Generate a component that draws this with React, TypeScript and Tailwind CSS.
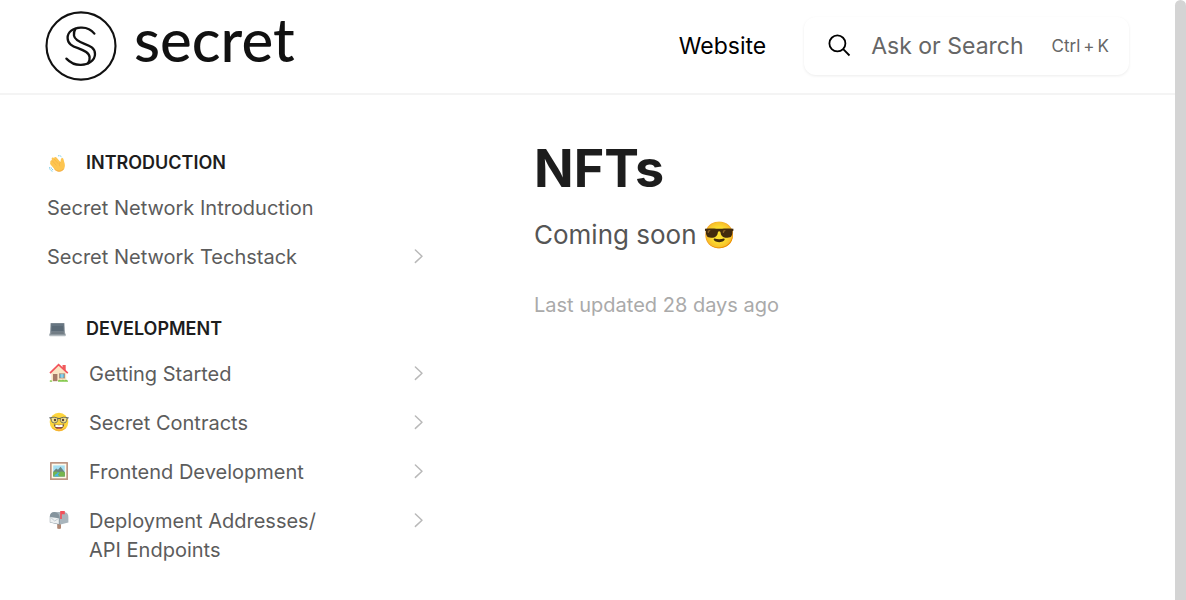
import type { ReactNode } from "react";

type Item = { label: string; icon?: ReactNode; nested?: boolean };
type Section = { title: string; icon: ReactNode; items: Item[] };

function WaveIcon() {
  return (
    <svg width="17" height="17" viewBox="0 0 17 17" fill="none" aria-hidden="true">
      <path d="M1.4 7.2C.8 6 2.4 4.6 3.2 5.4L2.7 4.2C2.3 2.9 4 2 4.7 3L5.2 3.6C4.9 2 6.6 1.4 7.5 2.5L11.4 7C11.9 5.4 11.5 3.3 13 3C14.6 2.8 14.6 5 15.2 7C16.6 10.8 15.8 14 13.4 15.4C10.6 17.2 7.4 16.6 5.4 14L1.5 9.4C.9 8.4 1.1 7.9 1.4 7.2Z" fill="#fdc550" />
      <path d="M3.2 5.6L7.4 10.4M5.1 4L9.3 8.8M11.4 7C10.2 8.4 10.2 10 10.8 11.2" stroke="#f2ad41" strokeWidth=".6" />
      <path d="M5.4 14C8 17 12.6 17 14.8 13.8" stroke="#f0a63c" strokeWidth=".9" />
      <path d="M9 .8C11 .4 12.4 1.2 12.8 2.2M.5 12.2C.6 14.6 1.8 16 4 16.3M2 12.4C2.2 13.8 3 14.6 4.3 14.9" stroke="#6fc8e4" strokeWidth=".9" strokeDasharray="1.4 .6" />
    </svg>
  );
}

function LaptopIcon() {
  return (
    <svg width="17" height="17" viewBox="0 0 17 17" aria-hidden="true">
      <path d="M2.2 2H14.8Q15.3 2 15.4 2.6L15.8 11H1.2L1.6 2.6Q1.7 2 2.2 2Z" fill="#7b8790" />
      <path d="M2.6 3H14.4L14.7 10.3H2.3Z" fill="#5b6a76" />
      <path d="M2.6 3H14.4L14.5 5H2.5Z" fill="#677682" />
      <path d="M1.2 11H15.8L16.8 14H.2Z" fill="#8d979e" />
      <path d="M2.4 11.5H14.6L15 12.6H2Z" fill="#59646d" />
      <path d="M.2 14H16.8V14.8Q16.6 15.2 16 15.2H1Q.4 15.2 .2 14.8Z" fill="#b2babf" />
    </svg>
  );
}

function HouseIcon() {
  return (
    <svg width="20" height="20" viewBox="0 0 20 20" aria-hidden="true">
      <path d="M13.5 2H16.7V8L13.5 5Z" fill="#f05b5b" />
      <path d="M2.4 9.2L9.6 2.4L17.2 9.2V18H2.4Z" fill="#fae6c4" />
      <path d="M1 10.2L9.6 1.7L18.8 10.2" fill="none" stroke="#f2545b" strokeWidth="1.7" />
      <rect x="4" y="11" width="4.4" height="7.2" fill="#a77b68" />
      <rect x="10.4" y="10.8" width="5.2" height="4.2" fill="#5db9dd" stroke="#b08a75" strokeWidth=".8" />
      <path d="M13 10.8V15" stroke="#fff" strokeWidth=".6" />
      <path d="M.8 18.8V17.6Q2 16.6 3.2 17.8V18.8ZM9 18.8V17.6Q10.5 16.2 12 17.3Q14 16 15.4 17.3Q17.6 15.8 19 18V18.8Z" fill="#83c94c" />
    </svg>
  );
}

function NerdIcon() {
  return (
    <svg width="20" height="20" viewBox="0 0 20 20" aria-hidden="true">
      <circle cx="10" cy="10" r="9.3" fill="#fdd53d" />
      <path d="M2.2 14.9A9.3 9.3 0 0 0 17.8 14.9Q10 20.4 2.2 14.9Z" fill="#f5af35" />
      <path d="M4.8 12.2Q10 13.4 15.2 12.2Q14.8 17 10 17T4.8 12.2Z" fill="#6d4c41" />
      <path d="M6.4 12.8Q10 13.5 13.6 12.8V14.9H6.4Z" fill="#fff" />
      <path d="M7.2 16.1Q10 15 12.8 16.1Q10 17.5 7.2 16.1Z" fill="#ef5a55" />
      <path d="M1.8 5.6Q5 4.6 8.7 6V8.5Q8.2 11 5.4 11T2.4 8.4ZM18.2 5.6Q15 4.6 11.3 6V8.5Q11.8 11 14.6 11T17.6 8.4Z" fill="#f3e28d" stroke="#4e565b" strokeWidth=".8" />
      <path d="M.3 5.8L2 6M8.7 6.7Q10 5.8 11.3 6.7M18 6L19.7 5.8" fill="none" stroke="#4e565b" />
      <circle cx="6" cy="8" r="1.2" fill="#5d4037" />
      <circle cx="14" cy="8" r="1.2" fill="#5d4037" />
    </svg>
  );
}

function PictureIcon() {
  return (
    <svg width="20" height="20" viewBox="0 0 20 20" aria-hidden="true">
      <rect x="1" y="1" width="18" height="18" rx=".6" fill="#bc9683" />
      <rect x="2.7" y="2.7" width="14.6" height="14.6" fill="#fff9ea" />
      <rect x="4.2" y="4.4" width="11.6" height="11" fill="#a6dff3" />
      <path d="M4.2 10.8L7.2 7.4L9 8.8L11.5 5.8L15.8 11.2V15.4H4.2Z" fill="#6b8582" />
      <path d="M4.2 11.2Q7 9.6 9.5 11.2Q13 9.5 15.8 11.5V15.4H4.2Z" fill="#76b54d" />
      <path d="M8.2 11.2Q12 11.5 9.4 13Q8 14 11 15.4H5.2Q5.4 13.4 8 12.5Q9 12 8.2 11.2Z" fill="#49b5e4" />
    </svg>
  );
}

function MailboxIcon() {
  return (
    <svg width="20" height="20" viewBox="0 0 20 20" aria-hidden="true">
      <path d="M8.2 12H12V18.5Q10 19.4 8.2 18.5Z" fill="#b08773" />
      <path d="M4.5 2H15Q19.4 2.6 19.4 7V12.6L10.6 14.8Z" fill="#a9b5bc" />
      <path d="M.8 6.5Q1 2.2 5.2 2.1Q9.8 2.4 10.6 7V14.8L.8 12.6Z" fill="#85949d" />
      <path d="M1.2 7L9.8 8.3V14L1.2 12.2Z" fill="#eef1f2" />
      <path d="M1.2 7L5.7 11L9.8 8.3" fill="none" stroke="#b8c4ca" strokeWidth=".8" />
      <path d="M11.2 1H15.8V4.2H12.8V9H11.2Z" fill="#f2505a" />
    </svg>
  );
}

const sections: Section[] = [
  {
    title: "Introduction",
    icon: <WaveIcon />,
    items: [
      { label: "Secret Network Introduction" },
      { label: "Secret Network Techstack", nested: true },
    ],
  },
  {
    title: "Development",
    icon: <LaptopIcon />,
    items: [
      { label: "Getting Started", icon: <HouseIcon />, nested: true },
      { label: "Secret Contracts", icon: <NerdIcon />, nested: true },
      { label: "Frontend Development", icon: <PictureIcon />, nested: true },
      { label: "Deployment Addresses/ API Endpoints", icon: <MailboxIcon />, nested: true },
    ],
  },
];

function Logo() {
  return (
    <a href="#home" className="flex items-center gap-[17px] text-[#111111]">
      <svg width="72" height="72" viewBox="0 0 72 72" fill="none" stroke="currentColor" aria-hidden="true">
        <ellipse cx="36" cy="36" rx="34.5" ry="33.6" strokeWidth="2.1" />
        <g strokeWidth="2.3" strokeLinecap="round" strokeLinejoin="round">
          <path d="M49.4 23.6C46 19.2 41 17.2 35.5 17.6C28 18 22.6 22 22.6 28C22.6 34 27.5 36.2 33 38.2C39 40.4 44 42.5 44.6 47C44.9 49.8 44.2 51.8 43 53.4" />
          <path d="M21.4 48.6C25.5 52.9 30.5 55.1 36 54.9C44 54.6 50 50 50 44C50 38 45 35.8 39.5 33.8C33 31.4 29.6 29.4 29 25.6C28.7 23 29.3 20.6 30.4 19" />
        </g>
      </svg>
      <span className="pb-[14px] font-['Lato',sans-serif] text-[60px] leading-[60px] font-medium">secret</span>
    </a>
  );
}

function Chevron() {
  return (
    <svg width="10" height="16" viewBox="0 0 10 16" fill="none" stroke="#b9b9b9" strokeWidth="1.5" className="mt-[5px] ml-auto shrink-0" aria-hidden="true">
      <path d="M1.4 2L8 8.2L1.4 14.4" strokeLinecap="round" strokeLinejoin="round" />
    </svg>
  );
}

function NavItem({ item }: { item: Item }) {
  return (
    <li>
      <a href="#page" className="flex items-start py-[10px] text-[20px] leading-[29px] text-[#5c5c5c]">
        {item.icon && <span className="w-[42px] shrink-0 pt-[3px] pl-[2px]">{item.icon}</span>}
        <span className={item.nested ? "pr-[72px]" : ""}>{item.label}</span>
        {item.nested && <Chevron />}
      </a>
    </li>
  );
}

export default function App() {
  return (
    <div className="flex min-h-screen bg-white font-['Inter','Noto_Color_Emoji',sans-serif]">
      <div className="min-w-0 grow">
        <header className="flex h-[95px] items-center border-b-2 border-[#f4f4f4] pr-[46px] pb-[2px] pl-[45px]">
          <Logo />
          <a href="#website" className="ml-auto text-[23px] leading-8 text-black">
            Website
          </a>
          <button
            type="button"
            className="ml-[38px] flex h-[58px] items-center rounded-xl bg-white pr-5 pl-6 shadow-[0_1px_3px_rgba(0,0,0,0.08)]"
          >
            <svg width="23" height="23" viewBox="0 0 23 23" fill="none" stroke="#000000" strokeWidth="1.8" aria-hidden="true">
              <circle cx="9.4" cy="9.4" r="8" />
              <path d="M15.2 15.2L21.5 21.5" />
            </svg>
            <span className="ml-5 text-[23px] leading-8 text-[#666666]">Ask or Search</span>
            <kbd className="ml-7 flex gap-[3px] font-['Inter',sans-serif] text-[17px] leading-6 text-[#666666]">
              <span>Ctrl</span>
              <span>+</span>
              <span>K</span>
            </kbd>
          </button>
        </header>
        <div className="flex">
          <nav aria-label="Table of contents" className="flex w-[424px] shrink-0 flex-col gap-[35px] pt-14 pl-[47px]">
            {sections.map((section) => (
              <section key={section.title}>
                <h2 className="flex text-[18px] leading-6 font-semibold text-[#1d1d1d] uppercase">
                  <span className="w-[39px] shrink-0 pt-1 pl-[2px]">{section.icon}</span>
                  {section.title}
                </h2>
                <ul className="mt-[9px]">
                  {section.items.map((item) => (
                    <NavItem key={item.label} item={item} />
                  ))}
                </ul>
              </section>
            ))}
          </nav>
          <main className="min-w-0 grow pt-10 pr-11 pl-[110px]">
            <h1 className="text-[52px] leading-[68px] font-bold text-[#1d1d1d]">NFTs</h1>
            <p className="mt-3 text-[26px] leading-10 text-[#555555]">Coming soon 😎</p>
            <p className="mt-9 text-[20px] leading-[29px] text-[#aaaaaa]">Last updated 28 days ago</p>
          </main>
        </div>
      </div>
      <div className="w-[11px] shrink-0 rounded-t-full bg-[#d4d4d4]" aria-hidden="true" />
    </div>
  );
}
